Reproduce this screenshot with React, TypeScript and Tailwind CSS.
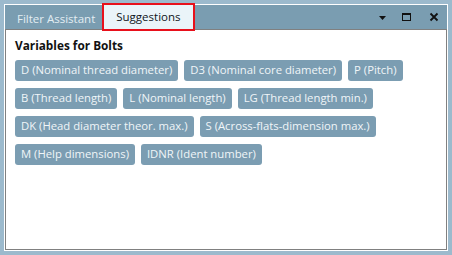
const variables = [
  "D (Nominal thread diameter)",
  "D3 (Nominal core diameter)",
  "P (Pitch)",
  "B (Thread length)",
  "L (Nominal length)",
  "LG (Thread length min.)",
  "DK (Head diameter theor. max.)",
  "S (Across-flats-dimension max.)",
  "M (Help dimensions)",
  "IDNR (Ident number)",
];

export default function App() {
  return (
    <div className="h-[255px] w-[452px] bg-[#9cbacd] p-1 font-['Open_Sans',sans-serif]">
      <div className="flex h-[247px] flex-col border border-white bg-[#7a9db1]">
        {/* Tab strip */}
        <div className="flex h-6 items-start">
          <div className="pl-3 pr-[7px] pt-[5px] text-[11.5px] text-[#e3edf3]">Filter Assistant</div>
          <div className="relative z-10 -mt-[2px] flex h-[28px] items-center border-2 border-[#e8101b] bg-[#eaf4f9] px-3 text-[11.5px] text-[#10141a]">
            Suggestions
          </div>
          <div className="ml-auto flex items-center self-center pr-[8px]">
            <svg width="9" height="9" viewBox="0 0 9 9" className="mr-[15px]">
              <path d="M1 3h7L4.5 7z" fill="#111" />
            </svg>
            <div className="mr-[18px] h-[8px] w-[9px] border border-t-2 border-[#111]" />
            <svg width="10" height="10" viewBox="0 0 10 10">
              <path d="M1.5 1.5l7 7M8.5 1.5l-7 7" stroke="#111" strokeWidth="1.8" />
            </svg>
          </div>
        </div>

        {/* Content */}
        <div className="flex-1 border border-[#808080] bg-white px-[9px] pt-[7px]">
          <div className="text-[11.8px] font-bold text-[#111]">Variables for Bolts</div>
          <div className="mt-[5px] flex flex-wrap gap-x-[6px] gap-y-[7px] pr-4">
            {variables.map((v) => (
              <span
                key={v}
                className="flex h-[21px] items-center rounded-[3px] bg-[#7b9db2] px-[6px] text-[11.3px] text-[#f0f5f8]"
              >
                {v}
              </span>
            ))}
          </div>
        </div>
      </div>
    </div>
  );
}
